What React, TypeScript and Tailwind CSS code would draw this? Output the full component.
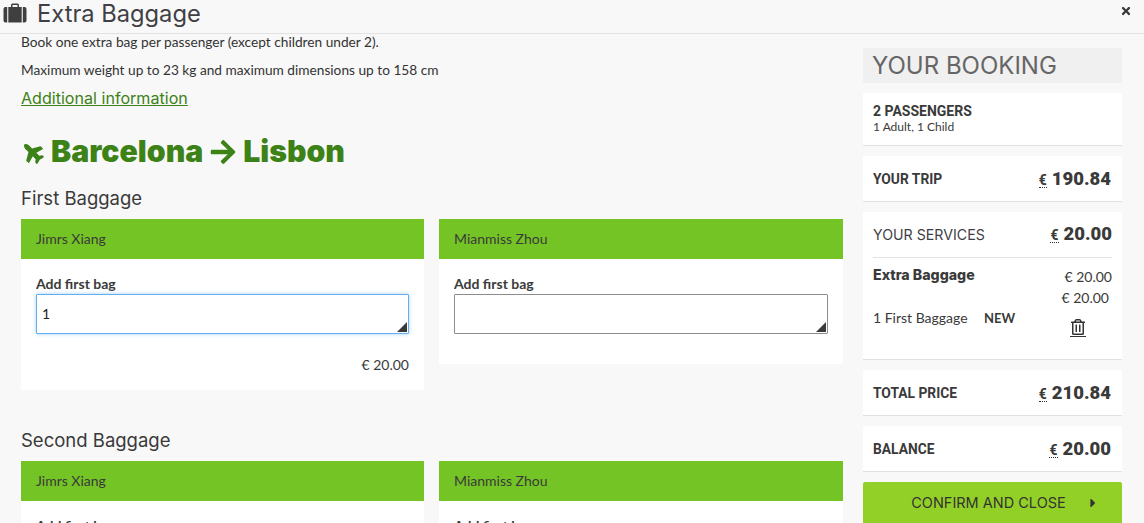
import { FaArrowRight, FaCaretRight, FaPlane, FaTimes, FaRegTrashAlt } from "react-icons/fa"

const lato = "font-['Lato','Liberation_Sans',sans-serif]"
const heading = "font-['Inter','Liberation_Sans',sans-serif]"
const numeric = "font-['Roboto','Liberation_Sans',sans-serif]"

function SuitcaseIcon() {
  return (
    <svg viewBox="0 0 24 20" className="w-6 h-5 -mt-[8px] text-[#3f3f3f]" fill="currentColor">
      <path d="M8 4V2a1.5 1.5 0 0 1 1.5-1.5h5A1.5 1.5 0 0 1 16 2v2h-1.5V2h-5v2z" />
      <path d="M2.5 4H4.2v15.5H2.5A2 2 0 0 1 .5 17.500V6a2 2 0 0 1 2-2z" />
      <rect x="5.300" y="4" width="13.400" height="15.500" />
      <path d="M19.800 4h1.700a2 2 0 0 1 2 2v11.500a2 2 0 0 1-2 2h-1.700z" />
    </svg>
  )
}

function Price({ value }: { value: string }) {
  return (
    <span className={`${numeric} flex items-baseline gap-[5px] font-black text-[18.500px] leading-none text-[#3a3a3a]`}>
      <span className="text-[14px] font-bold border-b border-dotted border-[#333] leading-[14px]">€</span>
      {value}
    </span>
  )
}

function SummaryRow({ label, value }: { label: string; value: string }) {
  return (
    <div className="h-[46px] flex items-center justify-between bg-white border-b border-[#e0e0e0] pt-[2px] pl-[10px] pr-[11px]">
      <span className={`${numeric} font-bold text-[13.800px] text-[#3a3a3a]`}>{label}</span>
      <Price value={value} />
    </div>
  )
}

function PassengerCard({ name, focused, value, price }: { name: string; focused?: boolean; value?: string; price?: string }) {
  return (
    <div className="self-start bg-white">
      <div className={`${lato} h-10 flex items-center bg-[#74c425] px-[15px] pb-[1px] text-[14px] text-[#3a3a3a]`}>{name}</div>
      <div className={`px-[15px] pt-[16px] ${price ? "pb-[16px]" : "pb-[30px]"}`}>
        <div className={`${lato} font-bold text-[14px] leading-[18px] text-[#3a3a3a]`}>Add first bag</div>
        <div
          className={`relative mt-[1px] h-10 flex items-center pl-[5px] pb-[1px] rounded-[1px] bg-white border ${
            focused ? "border-[#62aeee] shadow-[0_0_4px_#a6d2f5]" : "border-[#8c8c8c]"
          } ${lato} text-[14px] text-[#222]`}
        >
          {value}
          <span className="absolute right-[1px] bottom-[1px] w-[10px] h-[10px] bg-[#3a3a3a] [clip-path:polygon(100%_0,100%_100%,0_100%)]" />
        </div>
        {price && (
          <div className={`${lato} mt-[20px] h-[20px] text-right text-[14px] text-[#3a3a3a]`}>{price}</div>
        )}
      </div>
    </div>
  )
}

function BaggageSection({ title, first }: { title: string; first?: boolean }) {
  return (
    <section>
      <h2 className={`${heading} text-[18.500px] leading-[21px] text-[#3a3a3a] mb-[10px]`}>{title}</h2>
      <div className="grid grid-cols-[403px_404px] gap-[15px]">
        <PassengerCard name="Jimrs Xiang" focused={first} value={first ? "1" : undefined} price="€ 20.00" />
        <PassengerCard name="Mianmiss Zhou" />
      </div>
    </section>
  )
}

export default function App() {
  return (
    <div className="w-[1144px] h-[523px] overflow-hidden bg-[#f8f8f8]">
      <header className="h-[34px] flex items-center justify-between border-b border-[#e2e2e2] pl-[3px] pr-[12px]">
        <div className="flex items-center gap-[10px]">
          <SuitcaseIcon />
          <h1 className={`${heading} text-[23.700px] leading-[28px] text-[#3f3f45] -mt-[5px]`}>Extra Baggage</h1>
        </div>
        <FaTimes className="text-[#3a3a3a] text-[12px] -mt-[12px]" />
      </header>

      <div className="flex pl-[21px] pr-[22px] gap-[20px]">
        <main className="w-[822px]">
          <p className={`${lato} text-[13.700px] leading-[18px] -mt-[1px] text-[#333]`}>Book one extra bag per passenger (except children under 2).</p>
          <p className={`${lato} text-[13.700px] leading-[18px] mt-[10px] text-[#333]`}>Maximum weight up to 23 kg and maximum dimensions up to 158 cm</p>
          <a className={`${heading} block w-fit text-[16.100px] leading-[18px] mt-[10px] text-[#3d8217] underline`}>Additional information</a>
          <div className="flex items-center mt-[27px] h-[36px] text-[#3d8217]">
            <span className="w-[23px] h-[23px] shrink-0 flex items-center justify-center">
              <FaPlane className="text-[23px] shrink-0 rotate-[225deg]" />
            </span>
            <span className={`${heading} font-black text-[30.200px] ml-[7px]`}>Barcelona</span>
            <FaArrowRight className="text-[28px] mx-[6px]" />
            <span className={`${heading} font-black text-[30.200px]`}>Lisbon</span>
          </div>
          <div className="mt-[18px] flex flex-col gap-[40px]">
            <BaggageSection title="First Baggage" first />
            <BaggageSection title="Second Baggage" />
          </div>
        </main>

        <aside className="w-[259px] pt-[14px] flex flex-col gap-[10px]">
          <div className={`${heading} h-[35px] flex items-center bg-[#f0f0f0] px-[9px] text-[24px] text-[#666]`}>YOUR BOOKING</div>
          <div className="h-[53px] bg-white border-b border-[#e0e0e0] pl-[10px] pt-[10px]">
            <div className={`${numeric} font-bold text-[14px] leading-[16px] text-[#3a3a3a]`}>2 PASSENGERS</div>
            <div className={`${lato} text-[12px] leading-[16px] text-[#3a3a3a]`}>1 Adult, 1 Child</div>
          </div>
          <SummaryRow label="YOUR TRIP" value="190.84" />
          <div className="h-[148px] bg-white border-b border-[#e0e0e0] px-[10px]">
            <div className="h-[46px] flex items-center justify-between border-b border-[#e3e3e3]">
              <span className={`${heading} text-[14.200px] text-[#3f3f45]`}>YOUR SERVICES</span>
              <Price value="20.00" />
            </div>
            <div className="flex justify-between pt-[8px]">
              <div>
                <div className={`${heading} font-extrabold text-[14.200px] leading-[18px] text-[#3a3a3a]`}>Extra Baggage</div>
                <div className={`${lato} flex mt-[25px] text-[14px] leading-[18px] text-[#3a3a3a]`}>
                  <span className="w-[111px]">1 First Baggage</span>
                  <span className="font-bold text-[13px]">NEW</span>
                </div>
              </div>
              <div className={`${lato} flex flex-col items-end text-[14px] text-[#3a3a3a] leading-[21px]`}>
                <span>€ 20.00</span>
                <span className="mr-[3px]">€ 20.00</span>
                <span className="mr-[26px] mt-[11px] border-b border-[#333] pb-[1px]">
                  <FaRegTrashAlt className="text-[16px] text-[#333]" />
                </span>
              </div>
            </div>
          </div>
          <SummaryRow label="TOTAL PRICE" value="210.84" />
          <SummaryRow label="BALANCE" value="20.00" />
          <button className={`${heading} h-[42px] shrink-0 rounded-t-[2px] bg-[#93d027] flex items-center justify-center gap-[20px] pl-[26px] text-[14.500px] text-[#333]`}>
            CONFIRM AND CLOSE
            <FaCaretRight className="text-[14px]" />
          </button>
        </aside>
      </div>
    </div>
  )
}
